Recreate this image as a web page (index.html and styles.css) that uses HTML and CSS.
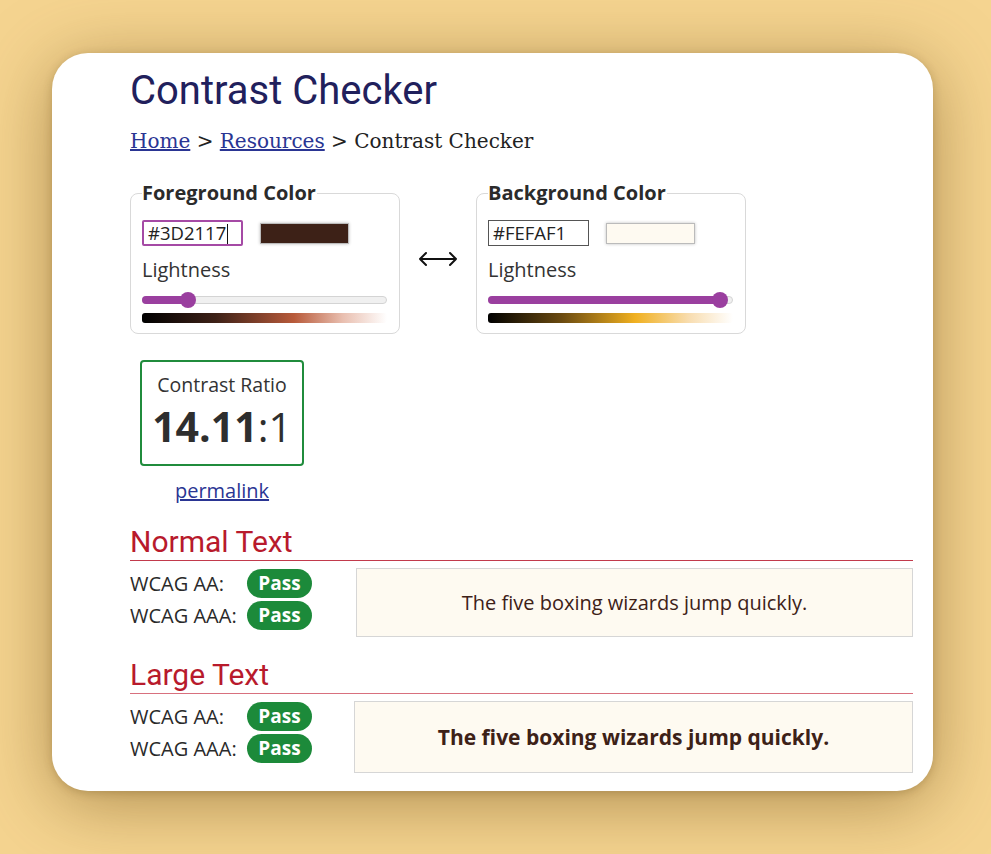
FILE: index.html
```html
<!DOCTYPE html>
<html>
<head>
<meta charset="utf-8">
<link rel="stylesheet" href="styles.css">
</head>
<body>
<div class="card">
  <h1 class="title">Contrast Checker</h1>
  <nav class="crumbs"><a href="#">Home</a> &gt; <a href="#">Resources</a> &gt; Contrast Checker</nav>

  <div class="pickers">
    <fieldset class="picker">
      <legend>Foreground Color</legend>
      <div class="row">
        <div class="hex hex-fg">#3D2117<span class="caret"></span></div>
        <div class="swatch swatch-fg"></div>
      </div>
      <div class="label">Lightness</div>
      <div class="track"><div class="fill fill-fg"><span class="thumb"></span></div></div>
      <div class="grad grad-fg"></div>
    </fieldset>

    <div class="swap">
      <svg width="40" height="20" viewBox="0 0 40 20"><path d="M2 10H38M8 4L2 10L8 16M32 4L38 10L32 16" fill="none" stroke="#111" stroke-width="2" stroke-linecap="round" stroke-linejoin="round"/></svg>
    </div>

    <fieldset class="picker">
      <legend>Background Color</legend>
      <div class="row">
        <div class="hex hex-bg">#FEFAF1</div>
        <div class="swatch swatch-bg"></div>
      </div>
      <div class="label">Lightness</div>
      <div class="track"><div class="fill fill-bg"><span class="thumb"></span></div></div>
      <div class="grad grad-bg"></div>
    </fieldset>
  </div>

  <div class="ratio-col">
    <div class="ratio">
      <div class="ratio-label">Contrast Ratio</div>
      <div class="ratio-value"><b>14.11</b>:1</div>
    </div>
    <a class="permalink" href="#">permalink</a>
  </div>

  <section class="result">
    <h2 class="result-title">Normal Text</h2>
    <div class="result-body">
      <div class="levels">
        <div class="level"><span class="level-name">WCAG AA:</span><span class="pill">Pass</span></div>
        <div class="level"><span class="level-name">WCAG AAA:</span><span class="pill">Pass</span></div>
      </div>
      <div class="sample">The five boxing wizards jump quickly.</div>
    </div>
  </section>

  <section class="result result-large">
    <h2 class="result-title">Large Text</h2>
    <div class="result-body">
      <div class="levels">
        <div class="level"><span class="level-name">WCAG AA:</span><span class="pill">Pass</span></div>
        <div class="level"><span class="level-name">WCAG AAA:</span><span class="pill">Pass</span></div>
      </div>
      <div class="sample sample-large">The five boxing wizards jump quickly.</div>
    </div>
  </section>
</div>
</body>
</html>
```
FILE: styles.css
```css
html, body {
  margin: 0;
  padding: 0;
}
body {
  width: 991px;
  height: 854px;
  overflow: hidden;
  background: #f5d490;
  font-family: "Open Sans", sans-serif;
  color: #333;
}
.card {
  margin: 53px 0 0 52px;
  width: 881px;
  height: 738px;
  box-sizing: border-box;
  background: #fff;
  border-radius: 36px;
  box-shadow: 0 2px 8px rgba(100, 70, 20, 0.25), 0 12px 70px rgba(110, 75, 20, 0.5);
  padding: 14px 20px 0 78px;
}
.title {
  margin: 0;
  font-family: Roboto, sans-serif;
  font-weight: 400;
  font-size: 40px;
  line-height: 48px;
  color: #21205c;
}
.crumbs {
  margin-top: 13px;
  font-family: "DejaVu Serif", serif;
  font-size: 20px;
  line-height: 26px;
  color: #222;
}
.crumbs a {
  color: #2a3593;
}
.pickers {
  display: flex;
  align-items: flex-start;
  margin-top: 27px;
}
.picker {
  margin: 0;
  width: 270px;
  box-sizing: border-box;
  border: 1px solid #d9d9d9;
  border-radius: 8px;
  padding: 2px 11px 10px 11px;
  min-width: 0;
}
.picker legend {
  padding: 0 1px 0 0;
  margin-left: 0;
  font-weight: 700;
  font-size: 20px;
  line-height: 24px;
  color: #2b2b2b;
}
.row {
  display: flex;
  align-items: center;
  gap: 17px;
  margin-top: 13px;
}
.hex {
  position: relative;
  width: 101px;
  height: 26px;
  box-sizing: border-box;
  font-size: 18.5px;
  line-height: 22px;
  padding-left: 4px;
  color: #222;
}
.hex-fg {
  border: 2px solid #a54aa5;
  border-radius: 2px;
}
.hex-bg {
  border: 1px solid #555;
  padding-left: 4px;
  line-height: 24px;
}
.caret {
  display: inline-block;
  width: 1px;
  height: 20px;
  background: #111;
  vertical-align: -4px;
  margin-left: 1px;
}
.swatch {
  width: 87px;
  height: 19px;
  border: 1px solid #bbb;
  box-shadow: 0 0 3px rgba(0, 0, 0, 0.25);
}
.swatch-fg { background: #3d2117; }
.swatch-bg { background: #fefaf1; }
.label {
  margin-top: 11px;
  font-size: 20px;
  line-height: 26px;
  color: #333;
}
.track {
  margin-top: 13px;
  width: 245px;
  height: 8px;
  box-sizing: border-box;
  border: 1px solid #d4d4d4;
  border-radius: 4px;
  background: #f0f0f0;
}
.fill {
  position: relative;
  height: 8px;
  margin: -1px 0 0 -1px;
  border-radius: 4px;
  background: #9a3f9f;
}
.fill-fg { width: 46px; }
.fill-bg { width: 232px; }
.thumb {
  position: absolute;
  right: -8px;
  top: -4px;
  width: 16px;
  height: 16px;
  border-radius: 50%;
  background: #9a3f9f;
}
.grad {
  margin-top: 9px;
  width: 245px;
  height: 10px;
  border-radius: 3px;
}
.grad-fg {
  background: linear-gradient(to right, #000 0%, #3d2117 30%, #b85a3a 62%, #e9bfb0 82%, #fff 100%);
}
.grad-bg {
  background: linear-gradient(to right, #000 0%, #6a4a10 30%, #f0b020 60%, #f8ddb0 82%, #fff 100%);
}
.swap {
  width: 76px;
  display: flex;
  justify-content: center;
  padding-top: 68px;
}
.ratio-col {
  width: 164px;
  margin: 26px 0 0 10px;
  display: flex;
  flex-direction: column;
  align-items: center;
}
.ratio {
  width: 164px;
  height: 106px;
  box-sizing: border-box;
  border: 2px solid #208c3c;
  border-radius: 4px;
  text-align: center;
  padding-top: 10px;
}
.ratio-label {
  font-size: 19.5px;
  line-height: 26px;
  color: #333;
}
.ratio-value {
  margin-top: 3px;
  font-size: 41px;
  line-height: 50px;
  color: #2e2e2e;
}
.ratio-value b {
  font-weight: 700;
}
.permalink {
  margin-top: 12px;
  font-size: 20px;
  line-height: 26px;
  color: #2a3593;
}
.result {
  margin-top: 20px;
}
.result-title {
  margin: 0;
  font-family: Roboto, sans-serif;
  font-weight: 400;
  font-size: 30px;
  line-height: 36px;
  color: #b81a2c;
  border-bottom: 1px solid #c23a4c;
}
.result-large .result-title {
  border-bottom-color: #d8707e;
}
.result-body {
  display: flex;
  align-items: flex-start;
  margin-top: 8px;
}
.levels {
  width: 226px;
  display: flex;
  flex-direction: column;
  gap: 3px;
}
.level {
  display: flex;
  align-items: center;
  height: 29px;
}
.level-name {
  width: 117px;
  font-size: 20px;
  color: #2a2a2a;
}
.pill {
  display: inline-block;
  width: 65px;
  height: 29px;
  box-sizing: border-box;
  border-radius: 15px;
  background: #1c8a3a;
  color: #fff;
  font-weight: 700;
  font-size: 19px;
  line-height: 28px;
  text-align: center;
}
.sample {
  flex: 1;
  height: 69px;
  margin-top: -1px;
  box-sizing: border-box;
  border: 1px solid #d6d6d6;
  background: #fefaf1;
  color: #3d2117;
  font-size: 20px;
  display: flex;
  align-items: center;
  justify-content: center;
}
.sample-large {
  height: 72px;
  margin-left: -2px;
  font-weight: 700;
  font-size: 21px;
}
```
